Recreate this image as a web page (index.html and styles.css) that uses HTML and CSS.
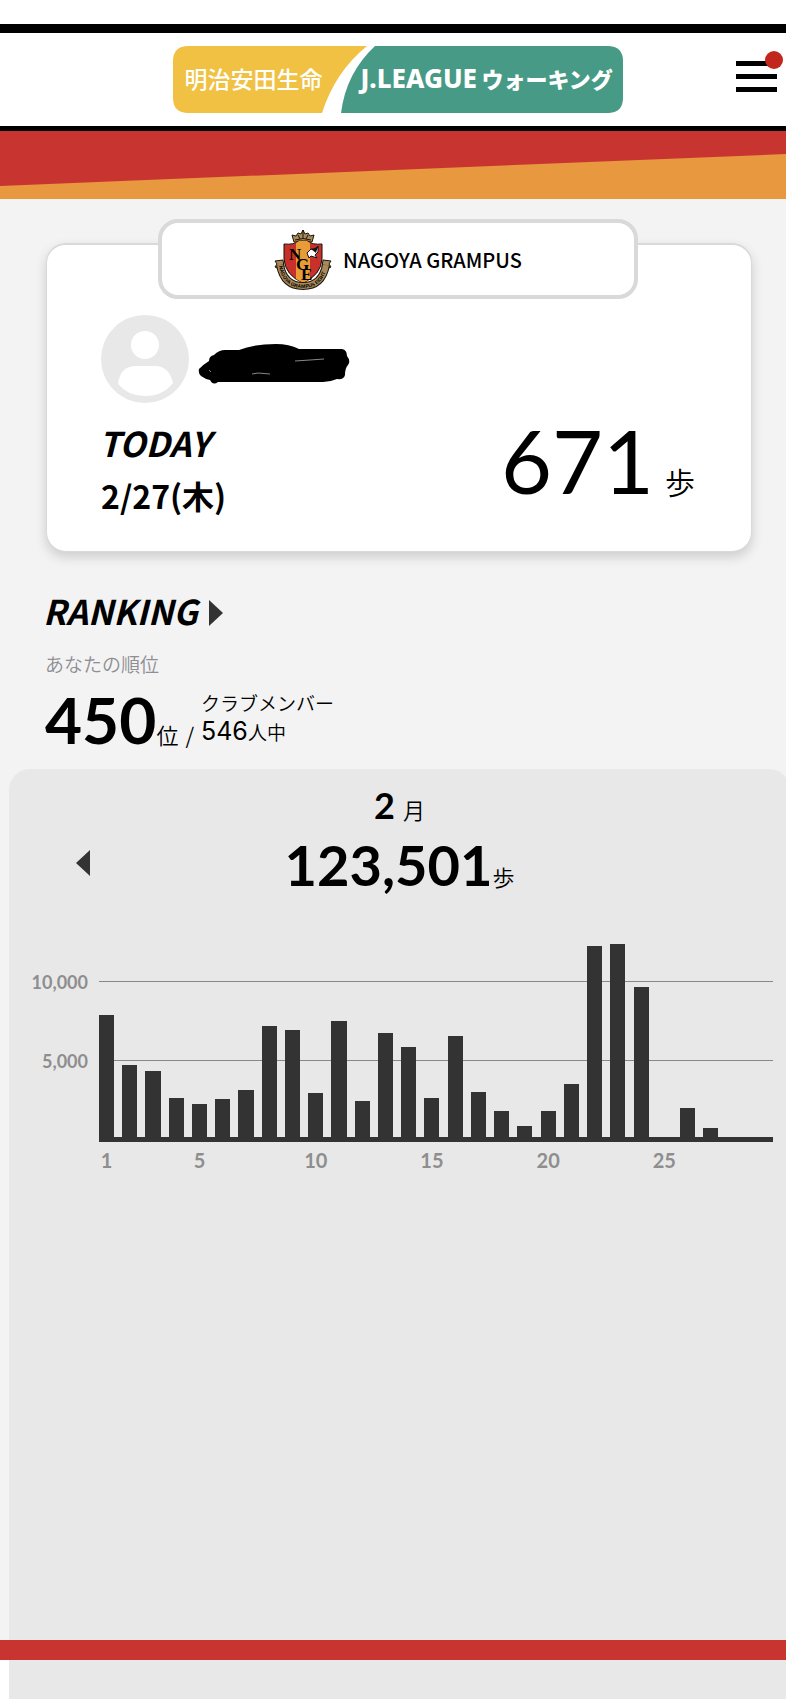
FILE: index.html
```html
<!DOCTYPE html>
<html lang="ja">
<head>
    <meta charset="UTF-8">
    <meta name="viewport" content="width=device-width, initial-scale=1.0">
    <title>J.LEAGUE ウォーキング</title>
    <link rel="stylesheet" href="styles.css">
</head>
<body>
    <header class="header">
        <a class="logo" href="#">
            <svg class="logo-bg" viewBox="0 0 450 67" preserveAspectRatio="none" aria-hidden="true">
                <path fill="#f0c142" d="M14 0H194Q162 26 149 67H14Q0 66 0 52V15Q0 1 14 0Z"/>
                <path fill="#479a86" d="M202 0H436Q450 1 450 15V52Q450 66 436 67H168Q173 27 202 0Z"/>
            </svg>
            <span class="logo-sponsor">明治安田生命</span>
            <span class="logo-league">J.LEAGUE</span>
            <span class="logo-walking">ウォーキング</span>
        </a>
        <button class="menu" type="button" aria-label="メニュー">
            <span class="menu-line"></span>
            <span class="menu-line"></span>
            <span class="menu-line"></span>
            <span class="menu-badge"></span>
        </button>
    </header>
    <div class="band"></div>

    <main class="main">
        <section class="card">
            <div class="club">
                <svg class="emblem" viewBox="0 0 58 61" aria-hidden="true">
                    <!-- crown -->
                    <path d="M20 13L18 6L22 7L24 4L27 5L29 1L31 5L34 4L36 7L40 6L38 13Z" fill="#a98a58" stroke="#1a140c" stroke-width="1"/>
                    <path d="M21 11Q29 8 37 11M24 6L26 10M34 6L32 10M29 3V9" fill="none" stroke="#1a140c" stroke-width="1"/>
                    <circle cx="29" cy="2" r="1" fill="#1a140c"/>
                    <!-- shield -->
                    <path d="M10 15Q20 16 24 12H34Q38 16 48 15V30Q47 46 29 54Q11 46 10 30Z" fill="#c8302a" stroke="#15110d" stroke-width="1"/>
                    <path d="M22 14L25 12H33L36 14V50L29 54L22 50Z" fill="#e99b36"/>
                    <path d="M33 24L37 20L42 21L44 17V23L41 26L43 29L37 27L35 29Z" fill="#fff" stroke="#111" stroke-width="1"/>
                    <path d="M37 20L41 19L44 17L42 24Z" fill="#111"/>
                    <!-- ribbon -->
                    <path d="M1 32L9 31L10 38L7 41L1 38L3 35ZM57 32L49 31L48 38L51 41L57 38L55 35Z" fill="#a98a58" stroke="#1a140c" stroke-width="1"/>
                    <path d="M6 36Q10 57 29 57Q48 57 52 36" fill="none" stroke="#1a140c" stroke-width="8"/>
                    <path d="M6 36Q10 57 29 57Q48 57 52 36" fill="none" stroke="#a98a58" stroke-width="6"/>
                    <path id="ribbon" d="M5 37Q9 59 29 59Q49 59 53 37" fill="none"/>
                    <text class="emblem-ribbon"><textPath href="#ribbon">NAGOYA GRAMPUS EIGHT</textPath></text>
                    <text class="emblem-letters" x="15 22 27" y="31 41 51">NGE</text>
                </svg>
                <span>NAGOYA GRAMPUS</span>
            </div>

            <div class="user">
                <svg class="avatar" viewBox="0 0 88 88" aria-hidden="true">
                    <circle cx="44" cy="44" r="44" fill="#e8e8e8"/>
                    <circle cx="44" cy="30" r="14" fill="#fff"/>
                    <path d="M17 69Q19 51 35 51H54Q68 51 72 68Q62 81 44 81Q27 81 17 69Z" fill="#fff"/>
                </svg>
                <svg class="scribble" viewBox="0 0 152 40" aria-hidden="true">
                    <path d="M1 25Q6 20 11 17Q11 12 16 11Q21 6 27 6H41Q55 0 78 0Q91 0 101 5H144Q149 6 149 12Q153 17 150 21Q147 24 147 31Q146 36 139 35Q132 38 125 38H20Q15 42 12 36Q7 35 3 32Q0 29 1 25Z"/>
                    <path d="M11 26L13 28M54 30L60 29L72 30M97 17L112 16L126 15" fill="none" stroke="#888" stroke-width="1"/>
                </svg>
            </div>

            <div class="today">
                <div>
                    <h2 class="title">TODAY</h2>
                    <p class="date">2/27(木)</p>
                </div>
                <p class="steps"><span class="steps-num">671</span><span class="steps-unit">歩</span></p>
            </div>
        </section>

        <section class="ranking">
            <a class="ranking-link" href="#">
                <h2 class="title">RANKING</h2>
                <svg class="arrow" viewBox="0 0 14 26" aria-hidden="true"><path d="M0 0L14 13L0 26Z"/></svg>
            </a>
            <p class="ranking-label">あなたの順位</p>
            <div class="rank">
                <p class="rank-place"><span class="rank-num">450</span>位</p>
                <span class="rank-slash">/</span>
                <p class="rank-members">クラブメンバー<br><span class="rank-total">546</span>人中</p>
            </div>
        </section>

        <section class="month">
            <div class="month-head">
                <button class="prev" type="button" aria-label="前の月">
                    <svg class="arrow" viewBox="0 0 14 26" aria-hidden="true"><path d="M14 0L0 13L14 26Z"/></svg>
                </button>
                <div class="month-total">
                    <p class="month-name"><span class="month-num">2</span> 月</p>
                    <p class="month-steps"><span class="month-steps-num">123,501</span>歩</p>
                </div>
            </div>
            <div class="chart">
                <div class="y-axis"><span>10,000</span><span>5,000</span></div>
                <div class="plot">
                    <div class="bars" id="bars"></div>
                    <div class="x-axis" id="days"></div>
                </div>
            </div>
        </section>
    </main>
    <div class="footer-line"></div>
    <div class="under"></div>

    <script>
        const steps = [7840, 4680, 4300, 2620, 2240, 2500, 3130, 7130, 6930, 2880, 7440, 2400, 6680, 5800,
            2590, 6520, 2950, 1750, 820, 1800, 3450, 12190, 12330, 9600, 0, 1940, 680, 0, 0];
        const bars = document.getElementById('bars');
        const days = document.getElementById('days');

        steps.forEach((value, i) => {
            const bar = document.createElement('div');
            bar.className = 'bar';
            bar.style.height = Math.round(value * 79 / 5000) + 'px';
            bars.appendChild(bar);

            const day = document.createElement('span');
            day.className = 'day';
            if (i === 0 || (i + 1) % 5 === 0) {
                day.textContent = i + 1;
            }
            days.appendChild(day);
        });
    </script>
</body>
</html>
```

FILE: styles.css
```css
* {
    box-sizing: border-box;
}

body {
    margin: 0;
    min-height: 100vh;
    display: flex;
    flex-direction: column;
    font-family: "Noto Sans CJK JP", sans-serif;
    color: #000;
    background-color: #fff;
    overflow-x: hidden;
}

h2, p {
    margin: 0;
}

a {
    color: inherit;
    text-decoration: none;
}

button {
    padding: 0;
    border: none;
    background: none;
    cursor: pointer;
}

/* header */
.header {
    display: grid;
    grid-template-columns: 1fr 450px 1fr;
    align-items: center;
    height: 107px;
    margin-top: 24px;
    padding: 0 9px 0 18px;
    border-top: 9px solid #000;
    border-bottom: 5px solid #000;
}

.logo {
    grid-column: 2;
    position: relative;
    display: flex;
    align-items: center;
    height: 67px;
    padding: 0 0 4px 12px;
    color: #fff;
    line-height: 32px;
    white-space: nowrap;
}

.logo-bg {
    position: absolute;
    inset: 0;
    width: 100%;
    height: 100%;
}

.logo-sponsor,
.logo-league,
.logo-walking {
    position: relative;
}

.logo-sponsor {
    flex: 0 0 176px;
    font-size: 23px;
    font-weight: 500;
}

.logo-league {
    flex: 0 0 121px;
    font-family: "Noto Sans", sans-serif;
    font-size: 26px;
    font-weight: 800;
}

.logo-walking {
    font-size: 22px;
    font-weight: 900;
}

.menu {
    position: relative;
    justify-self: end;
    display: flex;
    flex-direction: column;
    gap: 8px;
    width: 41px;
    margin-bottom: 6px;
}

.menu-line {
    height: 5px;
    background-color: #000;
}

.menu-badge {
    position: absolute;
    top: -10px;
    right: -6px;
    width: 18px;
    height: 18px;
    border-radius: 50%;
    background-color: #c1271c;
}

.band {
    height: 68px;
    background-color: #e8983e;
}

.band::before {
    content: "";
    display: block;
    height: 55px;
    background-color: #c83531;
    clip-path: polygon(0 0, 100% 0, 100% 23px, 0 100%);
}

/* today */
.main {
    flex: 1;
    display: flex;
    flex-direction: column;
    background-color: #f3f3f3;
}

.card {
    margin: 44px 34px 0 46px;
    height: 309px;
    padding: 0 56px 0 54px;
    border: 1px solid #d9d9d9;
    border-top-width: 2px;
    border-radius: 20px;
    background-color: #fff;
    box-shadow: 0 5px 12px rgba(0, 0, 0, 0.16);
}

.club {
    display: flex;
    align-items: center;
    justify-content: center;
    gap: 11px;
    width: 480px;
    height: 80px;
    margin: -26px auto 0;
    border: 4px solid #d9d9d9;
    border-radius: 20px;
    background-color: #fff;
    font-size: 20px;
    font-weight: 500;
}

.emblem {
    width: 58px;
    height: 61px;
}

.emblem-letters {
    font-family: "Liberation Serif", serif;
    font-size: 17px;
    font-weight: 700;
}

.emblem-ribbon {
    font-family: "Liberation Sans", sans-serif;
    font-size: 5px;
    font-weight: 700;
}

.user {
    display: flex;
    align-items: center;
    gap: 9px;
    margin-top: 16px;
}

.avatar {
    width: 88px;
    height: 88px;
}

.scribble {
    width: 152px;
    height: 40px;
    margin-top: 10px;
}

.title {
    margin-left: -2px;
    font-size: 34px;
    font-weight: 700;
    font-style: italic;
    line-height: 48px;
}

.today {
    display: flex;
    justify-content: space-between;
    margin-top: 16px;
}

.date {
    font-size: 32px;
    font-weight: 700;
    line-height: 56px;
}

.steps {
    display: flex;
    align-items: baseline;
    gap: 11px;
    line-height: 82px;
}

.steps-num {
    font-family: Lato, sans-serif;
    font-size: 88px;
}

.steps-unit {
    font-size: 30px;
    font-weight: 350;
}

/* ranking */
.ranking {
    padding: 35px 45px 4px;
}

.ranking-link {
    display: flex;
    align-items: center;
    gap: 11px;
}

.arrow {
    width: 14px;
    height: 26px;
    fill: #333;
}

.ranking-link .arrow {
    margin-top: 4px;
}

.ranking-label {
    margin-top: 15px;
    font-size: 19px;
    font-weight: 350;
    line-height: 28px;
    color: #8e8e93;
}

.rank {
    display: flex;
    align-items: flex-start;
    gap: 7px;
    margin-top: 11px;
}

.rank-place {
    font-size: 22px;
    font-weight: 350;
    line-height: 62px;
}

.rank-num {
    font-family: Lato, sans-serif;
    font-size: 64px;
    font-weight: 700;
}

.rank-slash {
    align-self: flex-end;
    font-size: 22px;
    font-weight: 350;
    line-height: 62px;
}

.rank-members {
    font-size: 19px;
    font-weight: 350;
    line-height: 28px;
}

.rank-total {
    font-family: Inter, sans-serif;
    font-size: 25px;
    font-weight: 400;
}

/* month */
.month {
    flex: 1;
    margin: 0 -4px 0 9px;
    padding: 11px 17px 40px 21px;
    border-radius: 21px 21px 0 0;
    background-color: #e8e8e8;
}

.month-head {
    display: grid;
    grid-template-columns: 60px 1fr 64px;
    align-items: center;
}

.prev {
    justify-self: end;
    display: flex;
    margin-top: 38px;
}

.month-total {
    text-align: center;
    font-size: 22px;
    font-weight: 350;
}

.month-name {
    line-height: 50px;
}

.month-num {
    margin-right: 3px;
    font-family: Lato, sans-serif;
    font-size: 36px;
    font-weight: 700;
}

.month-steps {
    line-height: 62px;
}

.month-steps-num {
    font-family: Lato, sans-serif;
    font-size: 56px;
    font-weight: 700;
}

.chart {
    display: flex;
    gap: 11px;
    margin-top: 35px;
    font-family: Lato, sans-serif;
    font-weight: 700;
    color: #8e8e8e;
}

.y-axis {
    display: flex;
    flex-direction: column;
    gap: 59px;
    width: 58px;
    padding-top: 30px;
    font-size: 18px;
    line-height: 20px;
    text-align: right;
}

.plot {
    flex: 1;
}

.bars {
    display: grid;
    grid-template-columns: repeat(29, 1fr);
    align-items: end;
    height: 200px;
    border-bottom: 5px solid #333;
    background:
        linear-gradient(#888, #888) 0 39px / 100% 1px no-repeat,
        linear-gradient(#888, #888) 0 118px / 100% 1px no-repeat;
}

.bar {
    width: 65%;
    margin-bottom: -2px;
    background-color: #333;
}

.x-axis {
    display: grid;
    grid-template-columns: repeat(29, 1fr);
    margin-top: 6px;
    font-size: 20px;
    line-height: 24px;
}

.day {
    display: flex;
    justify-content: center;
    width: 65%;
}

/* bottom */
.footer-line {
    height: 20px;
    background-color: #c83531;
}

.under {
    height: 39px;
    margin-left: 9px;
    background-color: #e8e8e8;
}
```
